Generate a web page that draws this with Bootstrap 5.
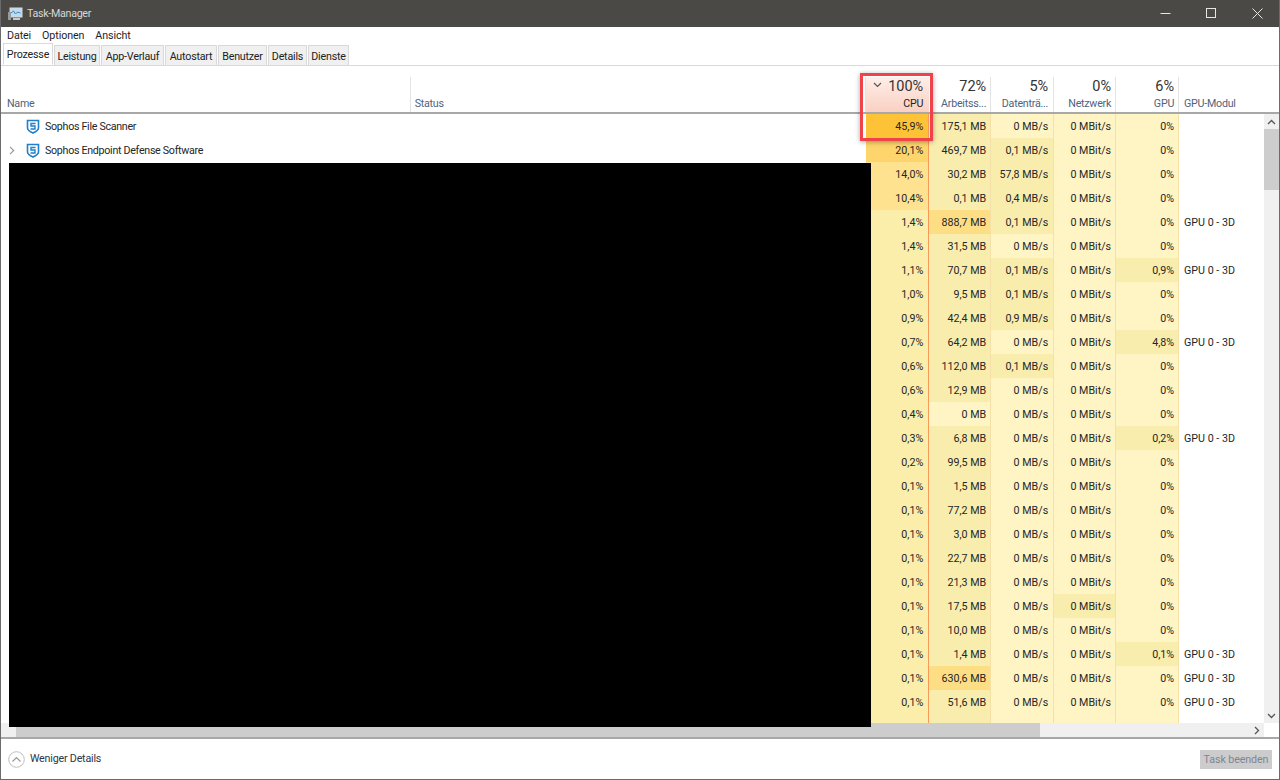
<!DOCTYPE html>
<html lang="de">
<head>
<meta charset="utf-8">
<title>Task-Manager</title>
<link href="https://cdn.jsdelivr.net/npm/bootstrap@5.3.0/dist/css/bootstrap.min.css" rel="stylesheet">
<style>
html,body{height:100%;overflow:hidden;background:#fff}
body{font-family:Roboto,"Noto Sans","Liberation Sans",sans-serif;font-size:10.7px;color:#262626;line-height:1.2}
.tm-window{position:relative;height:780px;width:1280px;border:1px solid #6b6b6b;border-top:0;overflow:hidden;background:#fff}
.tm-title{height:27px;margin:0 -1px;background:#4b4946;color:#d8d7d5;padding-left:8px;flex:none}
.tm-title svg{flex:none}
.tm-title-text{padding-top:2px;letter-spacing:-.3px}
.tm-winbtn{width:46px;height:27px;display:flex;align-items:center;justify-content:center}
.tm-menu{height:17px;flex:none;padding:2px 0 0 6px;gap:11px;color:#1e1e1e;letter-spacing:-.1px}
.tm-tabs{height:22px;flex:none;padding-left:2px;border-bottom:1px solid #d9d9d9;flex-wrap:nowrap;gap:1px}
.tm-tabs .nav-link{height:20px;margin:1px 0 0;padding:3px 0 0;border:1px solid #d9d9d9;border-bottom:0;border-radius:0;background:#f0f0f0;color:#222;display:flex;align-items:center;justify-content:center;font-size:10.7px;letter-spacing:-.2px}
.tm-tabs .nav-link.active{height:22px;margin:-1px 0 -1px;background:#fff;color:#222;border-color:#d9d9d9;border-bottom:1px solid #fff;padding:3px 0 0}
.w-t1{width:50px}.w-t2{width:46px}.w-t3{width:63px}.w-t4{width:52px}.w-t5{width:49px}.w-t6{width:39px}.w-t7{width:41px}
.tm-head{height:48px;flex:none;border-bottom:2px solid #a8a8a8;color:#4f637c}
.tm-head>div{display:flex;flex-direction:column;justify-content:flex-end;align-items:flex-end;padding:0 4px 0;height:35px;margin-top:11px;border-right:1px solid #e3e3e3}
.tm-head .tm-pct{font-size:14.5px;color:#333;line-height:17px;margin-bottom:1px}
.tm-head .tm-lab{line-height:16px;height:16px;white-space:nowrap;letter-spacing:-.25px}
.tm-head>div.c-name,.tm-head>div.c-status,.tm-head>div.c-mod{align-items:flex-start}
.tm-head>div.c-name{padding-left:6px}
.tm-head>div.c-disk{padding-right:5px}
.tm-head>div.c-cpu{background:linear-gradient(#ffeee8,#fad0c2);color:#222;position:relative;border-right:0;width:63px;padding-right:6px}
.tm-chev{position:absolute;left:7px;top:5px}
.tm-head>div.c-mod{border-right:0;width:100px;padding-left:5px}
.c-name{width:410px}.c-status{width:456px}.c-cpu{width:63px}.c-mem{width:62px}.c-disk{width:63px}.c-net{width:62px}.c-gpu{width:63px}.c-mod{width:85px}
.tm-body{min-height:0;min-width:0}
.tm-list{overflow:hidden;min-width:0}
.tm-row{height:24px;flex:none;align-items:center}
.tm-row>div{height:24px;line-height:26px;white-space:nowrap;overflow:hidden}
.tm-row>.c-cpu,.tm-row>.c-mem,.tm-row>.c-disk,.tm-row>.c-net,.tm-row>.c-gpu{text-align:right;padding-right:4px;background:#fff4c4;border-right:1px solid #f5e0a8}
.tm-row>.c-disk{padding-right:5px}
.tm-row>.c-cpu{background:#fbedaa;border-right:1px solid #f79a58;padding-right:5px}
.tm-row>.c-mod{padding-left:5px}
.tm-row>.c-name{display:flex;align-items:center;padding-left:25px;gap:5px;position:relative;letter-spacing:-.3px}
.tm-row>.c-name span{padding-top:2px;line-height:20px}
.tm-exp{position:absolute;left:8px;top:8px}
.tm-row>div.heat-a{background:#f9edad}
.tm-row>div.heat-b{background:#fede84}
.tm-row>div.heat-c{background:#fee28f}
.tm-row>div.heat-d{background:#fdd56c}
.tm-row>div.heat-e{background:#fdc236}
.tm-vbar{width:15px;flex:none;background:#f0f0f0;position:relative}
.tm-arrow{height:14px;width:15px;display:flex;align-items:center;justify-content:center;flex:none}
.tm-vbar .tm-arrow{height:15px}
.tm-vthumb{height:61px;width:15px;background:#cdcdcd;flex:none}
.tm-hbar{height:14px;flex:none;background:#f0f0f0}
.tm-hthumb{width:1024px;background:#cdcdcd;flex:none;margin-left:15px}
.tm-corner{width:15px;flex:none;background:#fff}
.tm-foot{height:42px;flex:none;border-top:2px solid #a8a8a8;padding:0 7px 0 7px;background:#fff}
.tm-less{color:#2c3648;gap:5px;letter-spacing:-.2px}
.tm-end{width:72px;height:19px;padding:0;border:0;border-radius:0;font-size:10.7px;line-height:19px;letter-spacing:-.1px;background:#ccc!important;color:#7f8595!important;opacity:1!important}
.tm-mask{position:absolute;left:8px;top:163px;width:862px;height:564px;background:#000}
.tm-mark{position:absolute;left:859px;top:73px;width:73px;height:68px;border:3px solid #ef4349;box-shadow:0 1px 5px rgba(0,0,0,.35);pointer-events:none}
</style>
</head>
<body>
<div class="tm-window d-flex flex-column">
  <div class="tm-title d-flex align-items-center">
    <svg width="15" height="14" viewBox="0 0 15 14" class="me-1"><rect x="2" y="1" width="12" height="9" fill="#bcdcf0" stroke="#d8d8d8"/><path d="M3 6l2.500-2 2 3 2-2 3 1" fill="none" stroke="#3f86c4"/><rect x="0" y="5" width="3" height="8" fill="#9a9a9a"/><rect x="5" y="11" width="7" height="2" fill="#c8c8c8"/></svg>
    <span class="tm-title-text">Task-Manager</span>
    <div class="ms-auto d-flex">
      <div class="tm-winbtn"><svg width="11" height="11" viewBox="0 0 11 11"><path d="M.5 5.500h10" stroke="#e6e6e6"/></svg></div>
      <div class="tm-winbtn"><svg width="11" height="11" viewBox="0 0 11 11"><rect x=".5" y=".5" width="9" height="9" fill="none" stroke="#e6e6e6"/></svg></div>
      <div class="tm-winbtn"><svg width="11" height="11" viewBox="0 0 11 11"><path d="M.5.500l10 10M10.500.500l-10 10" stroke="#e6e6e6"/></svg></div>
    </div>
  </div>
  <div class="tm-menu d-flex align-items-center"><span>Datei</span><span>Optionen</span><span>Ansicht</span></div>
  <ul class="nav nav-tabs tm-tabs">
    <li class="nav-item"><a class="nav-link active w-t1">Prozesse</a></li>
    <li class="nav-item"><a class="nav-link w-t2">Leistung</a></li>
    <li class="nav-item"><a class="nav-link w-t3">App-Verlauf</a></li>
    <li class="nav-item"><a class="nav-link w-t4">Autostart</a></li>
    <li class="nav-item"><a class="nav-link w-t5">Benutzer</a></li>
    <li class="nav-item"><a class="nav-link w-t6">Details</a></li>
    <li class="nav-item"><a class="nav-link w-t7">Dienste</a></li>
  </ul>
  <div class="tm-head d-flex">
    <div class="c-name"><span class="tm-lab">Name</span></div>
    <div class="c-status"><span class="tm-lab">Status</span></div>
    <div class="c-cpu"><svg class="tm-chev" width="9" height="6" viewBox="0 0 9 6"><path d="M1 1l3.500 3.500L8 1" fill="none" stroke="#555" stroke-width="1.200"/></svg><span class="tm-pct">100%</span><span class="tm-lab">CPU</span></div>
    <div class="c-mem"><span class="tm-pct">72%</span><span class="tm-lab">Arbeitss...</span></div>
    <div class="c-disk"><span class="tm-pct">5%</span><span class="tm-lab">Datenträ...</span></div>
    <div class="c-net"><span class="tm-pct">0%</span><span class="tm-lab">Netzwerk</span></div>
    <div class="c-gpu"><span class="tm-pct">6%</span><span class="tm-lab">GPU</span></div>
    <div class="c-mod"><span class="tm-lab">GPU-Modul</span></div>
  </div>
  <div class="tm-body d-flex flex-grow-1">
    <div class="tm-list flex-grow-1 d-flex flex-column">
      <div class="tm-row d-flex"><div class="c-name"><svg width="14" height="15" viewBox="0 0 14 15"><path d="M1.500 1.500h11v7.500c0 2.500-3.500 4-5.500 5-2-1-5.500-2.500-5.500-5z" fill="#fff" stroke="#1f7fc9" stroke-width="1.600"/><path d="M9.500 4.500h-4.500v2.500h4v3h-4.500" fill="none" stroke="#1f7fc9" stroke-width="1.400"/></svg><span>Sophos File Scanner</span></div><div class="c-status"></div><div class="c-cpu heat-e">45,9%</div><div class="c-mem heat-a">175,1 MB</div><div class="c-disk">0 MB/s</div><div class="c-net">0 MBit/s</div><div class="c-gpu">0%</div><div class="c-mod"></div></div>
      <div class="tm-row d-flex"><div class="c-name"><svg class="tm-exp" width="6" height="9" viewBox="0 0 6 9"><path d="M1 .8l3.700 3.700L1 8.200" fill="none" stroke="#9a9a9a" stroke-width="1.200"/></svg><svg width="14" height="15" viewBox="0 0 14 15"><path d="M1.500 1.500h11v7.500c0 2.500-3.500 4-5.500 5-2-1-5.500-2.500-5.500-5z" fill="#fff" stroke="#1f7fc9" stroke-width="1.600"/><path d="M9.500 4.500h-4.500v2.500h4v3h-4.500" fill="none" stroke="#1f7fc9" stroke-width="1.400"/></svg><span>Sophos Endpoint Defense Software</span></div><div class="c-status"></div><div class="c-cpu heat-d">20,1%</div><div class="c-mem heat-a">469,7 MB</div><div class="c-disk heat-a">0,1 MB/s</div><div class="c-net">0 MBit/s</div><div class="c-gpu">0%</div><div class="c-mod"></div></div>
      <div class="tm-row d-flex"><div class="c-name"></div><div class="c-status"></div><div class="c-cpu heat-c">14,0%</div><div class="c-mem heat-a">30,2 MB</div><div class="c-disk heat-a">57,8 MB/s</div><div class="c-net">0 MBit/s</div><div class="c-gpu">0%</div><div class="c-mod"></div></div>
      <div class="tm-row d-flex"><div class="c-name"></div><div class="c-status"></div><div class="c-cpu heat-c">10,4%</div><div class="c-mem heat-a">0,1 MB</div><div class="c-disk heat-a">0,4 MB/s</div><div class="c-net">0 MBit/s</div><div class="c-gpu">0%</div><div class="c-mod"></div></div>
      <div class="tm-row d-flex"><div class="c-name"></div><div class="c-status"></div><div class="c-cpu">1,4%</div><div class="c-mem heat-b">888,7 MB</div><div class="c-disk heat-a">0,1 MB/s</div><div class="c-net">0 MBit/s</div><div class="c-gpu">0%</div><div class="c-mod">GPU 0 - 3D</div></div>
      <div class="tm-row d-flex"><div class="c-name"></div><div class="c-status"></div><div class="c-cpu">1,4%</div><div class="c-mem heat-a">31,5 MB</div><div class="c-disk">0 MB/s</div><div class="c-net">0 MBit/s</div><div class="c-gpu">0%</div><div class="c-mod"></div></div>
      <div class="tm-row d-flex"><div class="c-name"></div><div class="c-status"></div><div class="c-cpu">1,1%</div><div class="c-mem heat-a">70,7 MB</div><div class="c-disk heat-a">0,1 MB/s</div><div class="c-net">0 MBit/s</div><div class="c-gpu heat-a">0,9%</div><div class="c-mod">GPU 0 - 3D</div></div>
      <div class="tm-row d-flex"><div class="c-name"></div><div class="c-status"></div><div class="c-cpu">1,0%</div><div class="c-mem heat-a">9,5 MB</div><div class="c-disk heat-a">0,1 MB/s</div><div class="c-net">0 MBit/s</div><div class="c-gpu">0%</div><div class="c-mod"></div></div>
      <div class="tm-row d-flex"><div class="c-name"></div><div class="c-status"></div><div class="c-cpu">0,9%</div><div class="c-mem heat-a">42,4 MB</div><div class="c-disk heat-a">0,9 MB/s</div><div class="c-net">0 MBit/s</div><div class="c-gpu">0%</div><div class="c-mod"></div></div>
      <div class="tm-row d-flex"><div class="c-name"></div><div class="c-status"></div><div class="c-cpu">0,7%</div><div class="c-mem heat-a">64,2 MB</div><div class="c-disk">0 MB/s</div><div class="c-net">0 MBit/s</div><div class="c-gpu heat-a">4,8%</div><div class="c-mod">GPU 0 - 3D</div></div>
      <div class="tm-row d-flex"><div class="c-name"></div><div class="c-status"></div><div class="c-cpu">0,6%</div><div class="c-mem heat-a">112,0 MB</div><div class="c-disk heat-a">0,1 MB/s</div><div class="c-net">0 MBit/s</div><div class="c-gpu">0%</div><div class="c-mod"></div></div>
      <div class="tm-row d-flex"><div class="c-name"></div><div class="c-status"></div><div class="c-cpu">0,6%</div><div class="c-mem heat-a">12,9 MB</div><div class="c-disk">0 MB/s</div><div class="c-net">0 MBit/s</div><div class="c-gpu">0%</div><div class="c-mod"></div></div>
      <div class="tm-row d-flex"><div class="c-name"></div><div class="c-status"></div><div class="c-cpu">0,4%</div><div class="c-mem">0 MB</div><div class="c-disk">0 MB/s</div><div class="c-net">0 MBit/s</div><div class="c-gpu">0%</div><div class="c-mod"></div></div>
      <div class="tm-row d-flex"><div class="c-name"></div><div class="c-status"></div><div class="c-cpu">0,3%</div><div class="c-mem heat-a">6,8 MB</div><div class="c-disk">0 MB/s</div><div class="c-net">0 MBit/s</div><div class="c-gpu heat-a">0,2%</div><div class="c-mod">GPU 0 - 3D</div></div>
      <div class="tm-row d-flex"><div class="c-name"></div><div class="c-status"></div><div class="c-cpu">0,2%</div><div class="c-mem heat-a">99,5 MB</div><div class="c-disk">0 MB/s</div><div class="c-net">0 MBit/s</div><div class="c-gpu">0%</div><div class="c-mod"></div></div>
      <div class="tm-row d-flex"><div class="c-name"></div><div class="c-status"></div><div class="c-cpu">0,1%</div><div class="c-mem heat-a">1,5 MB</div><div class="c-disk">0 MB/s</div><div class="c-net">0 MBit/s</div><div class="c-gpu">0%</div><div class="c-mod"></div></div>
      <div class="tm-row d-flex"><div class="c-name"></div><div class="c-status"></div><div class="c-cpu">0,1%</div><div class="c-mem heat-a">77,2 MB</div><div class="c-disk">0 MB/s</div><div class="c-net">0 MBit/s</div><div class="c-gpu">0%</div><div class="c-mod"></div></div>
      <div class="tm-row d-flex"><div class="c-name"></div><div class="c-status"></div><div class="c-cpu">0,1%</div><div class="c-mem heat-a">3,0 MB</div><div class="c-disk">0 MB/s</div><div class="c-net">0 MBit/s</div><div class="c-gpu">0%</div><div class="c-mod"></div></div>
      <div class="tm-row d-flex"><div class="c-name"></div><div class="c-status"></div><div class="c-cpu">0,1%</div><div class="c-mem heat-a">22,7 MB</div><div class="c-disk">0 MB/s</div><div class="c-net">0 MBit/s</div><div class="c-gpu">0%</div><div class="c-mod"></div></div>
      <div class="tm-row d-flex"><div class="c-name"></div><div class="c-status"></div><div class="c-cpu">0,1%</div><div class="c-mem heat-a">21,3 MB</div><div class="c-disk">0 MB/s</div><div class="c-net">0 MBit/s</div><div class="c-gpu">0%</div><div class="c-mod"></div></div>
      <div class="tm-row d-flex"><div class="c-name"></div><div class="c-status"></div><div class="c-cpu">0,1%</div><div class="c-mem heat-a">17,5 MB</div><div class="c-disk">0 MB/s</div><div class="c-net heat-a">0 MBit/s</div><div class="c-gpu">0%</div><div class="c-mod"></div></div>
      <div class="tm-row d-flex"><div class="c-name"></div><div class="c-status"></div><div class="c-cpu">0,1%</div><div class="c-mem heat-a">10,0 MB</div><div class="c-disk">0 MB/s</div><div class="c-net">0 MBit/s</div><div class="c-gpu">0%</div><div class="c-mod"></div></div>
      <div class="tm-row d-flex"><div class="c-name"></div><div class="c-status"></div><div class="c-cpu">0,1%</div><div class="c-mem heat-a">1,4 MB</div><div class="c-disk">0 MB/s</div><div class="c-net">0 MBit/s</div><div class="c-gpu heat-a">0,1%</div><div class="c-mod">GPU 0 - 3D</div></div>
      <div class="tm-row d-flex"><div class="c-name"></div><div class="c-status"></div><div class="c-cpu">0,1%</div><div class="c-mem heat-b">630,6 MB</div><div class="c-disk">0 MB/s</div><div class="c-net">0 MBit/s</div><div class="c-gpu">0%</div><div class="c-mod">GPU 0 - 3D</div></div>
      <div class="tm-row d-flex"><div class="c-name"></div><div class="c-status"></div><div class="c-cpu">0,1%</div><div class="c-mem heat-a">51,6 MB</div><div class="c-disk">0 MB/s</div><div class="c-net">0 MBit/s</div><div class="c-gpu">0%</div><div class="c-mod">GPU 0 - 3D</div></div>
      <div class="tm-row d-flex"><div class="c-name"></div><div class="c-status"></div><div class="c-cpu"></div><div class="c-mem heat-a"></div><div class="c-disk"></div><div class="c-net"></div><div class="c-gpu"></div><div class="c-mod"></div></div>
    </div>
    <div class="tm-vbar d-flex flex-column">
      <div class="tm-arrow"><svg width="9" height="6" viewBox="0 0 9 6"><path d="M1 5l3.500-3.500L8 5" fill="none" stroke="#555" stroke-width="1.300"/></svg></div>
      <div class="tm-vthumb"></div>
      <div class="tm-arrow mt-auto"><svg width="9" height="6" viewBox="0 0 9 6"><path d="M1 1l3.500 3.500L8 1" fill="none" stroke="#555" stroke-width="1.300"/></svg></div>
    </div>
  </div>
  <div class="tm-hbar d-flex">
    <div class="tm-hthumb"></div>
    <div class="tm-arrow ms-auto"><svg width="6" height="9" viewBox="0 0 6 9"><path d="M1 1l3.500 3.500L1 8" fill="none" stroke="#555" stroke-width="1.300"/></svg></div>
    <div class="tm-corner"></div>
  </div>
  <div class="tm-foot d-flex align-items-center justify-content-between">
    <div class="tm-less d-flex align-items-center"><svg width="17" height="17" viewBox="0 0 17 17"><circle cx="8.500" cy="8.500" r="7.800" fill="#fff" stroke="#bdbdbd"/><path d="M4.500 10.500l4-4 4 4" fill="none" stroke="#9a9a9a" stroke-width="1.200"/></svg><span>Weniger Details</span></div>
    <button type="button" class="btn btn-secondary tm-end" disabled>Task beenden</button>
  </div>
  <div class="tm-mask"></div>
  <div class="tm-mark"></div>
</div>
<script src="https://cdn.jsdelivr.net/npm/bootstrap@5.3.0/dist/js/bootstrap.bundle.min.js"></script>
</body>
</html>
